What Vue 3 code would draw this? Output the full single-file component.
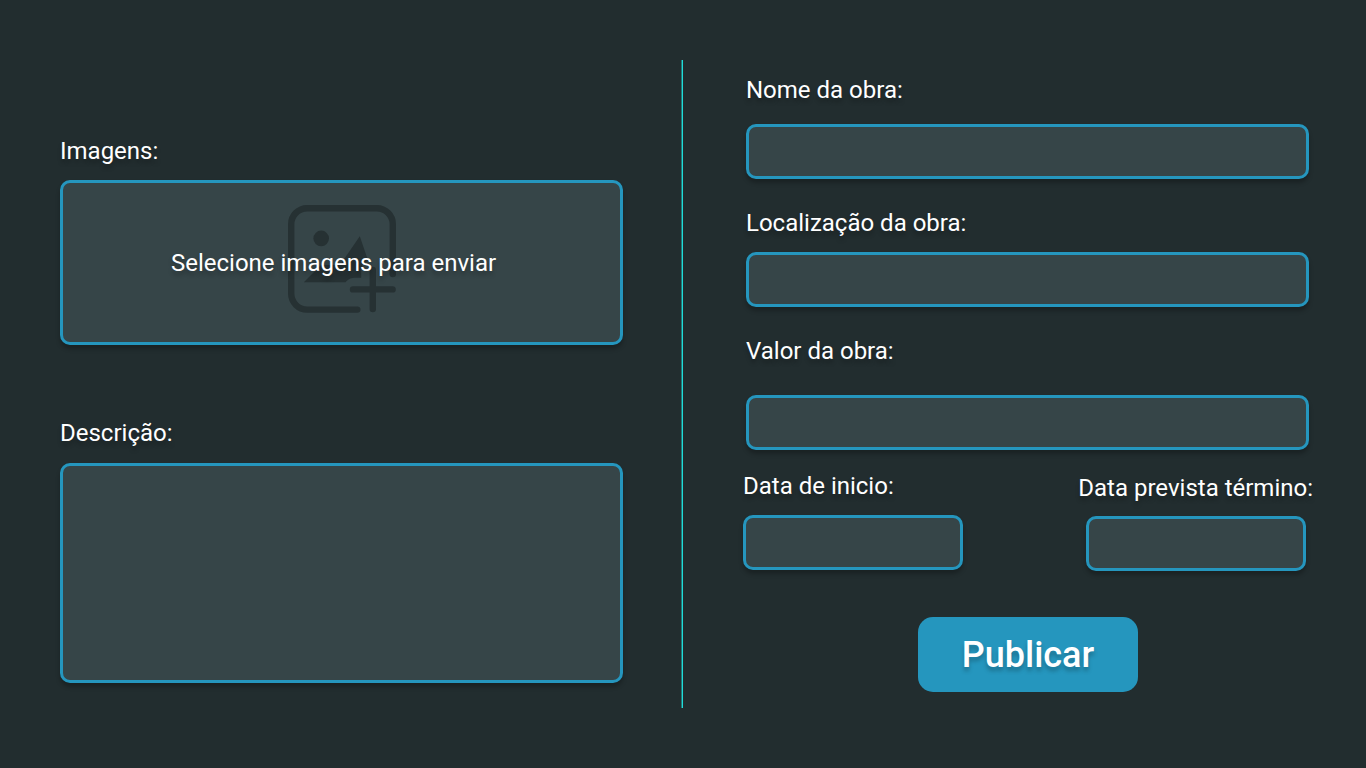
<script setup>
import { ref } from 'vue'

const descricao = ref('')
const nome = ref('')
const local = ref('')
const valor = ref('')
const inicio = ref('')
const termino = ref('')
</script>

<template>
  <form class="page" @submit.prevent>
    <section class="media">
      <div class="group">
        <label for="imagens">Imagens:</label>
        <div class="box upload">
          <svg class="upload-icon" viewBox="0 0 108 108" aria-hidden="true">
            <g fill="none" stroke="#263133" stroke-width="6.4" stroke-linecap="round">
              <path d="M69.3 104.6H19.2a16 16 0 0 1-16-16V19.2a16 16 0 0 1 16-16h69.6a16 16 0 0 1 16 16V69" />
              <path d="M84.8 65v39M65 84.4h39.6" />
            </g>
            <circle cx="33.2" cy="33.4" r="7.8" fill="#263133" />
            <path d="M71.8 31.2L80.200 56C76 57 73.200 60 73.200 65V72.800H68C63 72.800 61 73.500 57.500 77.300H15.800L33 60H52z" fill="#263133" />
          </svg>
          <span class="upload-text">Selecione imagens para enviar</span>
          <input id="imagens" class="file" type="file" accept="image/*" multiple />
        </div>
      </div>
      <div class="group description">
        <label for="descricao">Descrição:</label>
        <textarea id="descricao" v-model="descricao" class="box area"></textarea>
      </div>
    </section>

    <div class="divider"></div>

    <section class="details">
      <div class="group field name">
        <label for="nome">Nome da obra:</label>
        <input id="nome" v-model="nome" class="box" type="text" />
      </div>
      <div class="group field place">
        <label for="local">Localização da obra:</label>
        <input id="local" v-model="local" class="box" type="text" />
      </div>
      <div class="group field value">
        <label for="valor">Valor da obra:</label>
        <input id="valor" v-model="valor" class="box" type="text" />
      </div>
      <div class="dates">
        <div class="group date">
          <label for="inicio">Data de inicio:</label>
          <input id="inicio" v-model="inicio" class="box" type="text" />
        </div>
        <div class="group date end">
          <label for="termino">Data prevista término:</label>
          <input id="termino" v-model="termino" class="box" type="text" />
        </div>
      </div>
      <button class="publish" type="submit">Publicar</button>
    </section>
  </form>
</template>

<style>
body {
  margin: 0;
  background: #222d2f;
}
</style>

<style scoped>
.page {
  box-sizing: border-box;
  min-height: 100vh;
  padding: 60px 53px 60px 60px;
  display: grid;
  grid-template-columns: 563fr 4px 570fr;
  column-gap: 58px;
  background: #222d2f;
  color: #fff;
  font-family: Roboto, sans-serif;
  font-size: 24px;
  line-height: 28px;
  text-shadow: 0 4px 4px rgba(0, 0, 0, 0.25);
}

.media {
  padding-top: 77px;
}

.group {
  display: flex;
  flex-direction: column;
  gap: 15px;
}

.description {
  margin-top: 74px;
  gap: 16px;
}

.box {
  box-sizing: border-box;
  width: 100%;
  height: 55px;
  margin: 0;
  padding: 0 16px;
  border: 3px solid #2596be;
  border-radius: 10px;
  background: #364548;
  box-shadow: 0 4px 4px rgba(0, 0, 0, 0.25);
  color: #fff;
  font: inherit;
  outline: none;
}

.upload {
  position: relative;
  height: 165px;
  display: grid;
  place-items: center;
}

.upload-icon {
  grid-area: 1 / 1;
  width: 108px;
  height: 108px;
  margin-bottom: 8px;
}

.upload-text {
  grid-area: 1 / 1;
  margin-right: 16px;
  z-index: 1;
}

.file {
  position: absolute;
  inset: 0;
  z-index: 2;
  width: 100%;
  opacity: 0;
  cursor: pointer;
}

.area {
  display: block;
  height: 220px;
  padding: 12px 16px;
  resize: none;
}

.divider {
  width: 2px;
  min-height: 648px;
  background: linear-gradient(90deg, #21797a 50%, #20dcd8 50%);
}

.details {
  display: flex;
  flex-direction: column;
  padding-top: 16px;
}

.field {
  margin: 0 4px 0 3px;
}

.name {
  gap: 20px;
}

.place {
  margin-top: 30px;
}

.value {
  margin-top: 30px;
  gap: 30px;
}

.dates {
  display: flex;
  justify-content: space-between;
  align-items: flex-start;
  margin-top: 22px;
}

.date .box {
  width: 220px;
}

.end {
  align-items: center;
  margin-top: 2px;
  gap: 14px;
}

.publish {
  align-self: center;
  width: 220px;
  height: 75px;
  margin-top: 46px;
  padding: 0;
  border: 0;
  border-radius: 15px;
  background: #2596be;
  color: #fff;
  font: 500 36px/42px Roboto, sans-serif;
  text-shadow: inherit;
  cursor: pointer;
}
</style>
